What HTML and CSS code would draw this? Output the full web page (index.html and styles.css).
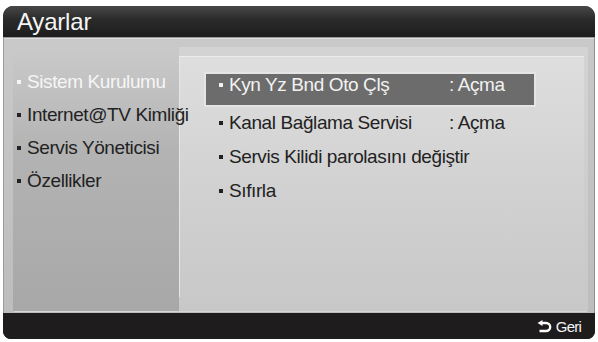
FILE: index.html
```html
<!DOCTYPE html>
<html lang="tr">
<head>
<meta charset="utf-8">
<title>Ayarlar</title>
<link rel="stylesheet" href="styles.css">
</head>
<body>
<div class="frame">
  <div class="titlebar">Ayarlar</div>
  <div class="main">
    <div class="inset">
      <ul class="side">
        <li class="side-item active"><span class="dot"></span>Sistem Kurulumu</li>
        <li class="side-item"><span class="dot"></span>Internet@TV Kimliği</li>
        <li class="side-item"><span class="dot"></span>Servis Yöneticisi</li>
        <li class="side-item"><span class="dot"></span>Özellikler</li>
      </ul>
      <div class="content">
        <div class="panel">
          <div class="row selected"><span class="label"><span class="dot"></span>Kyn Yz Bnd Oto Çlş</span><span class="value">: Açma</span></div>
          <div class="row"><span class="label"><span class="dot"></span>Kanal Bağlama Servisi</span><span class="value">: Açma</span></div>
          <div class="row"><span class="label"><span class="dot"></span>Servis Kilidi parolasını değiştir</span></div>
          <div class="row"><span class="label"><span class="dot"></span>Sıfırla</span></div>
        </div>
      </div>
    </div>
  </div>
  <div class="footer">
    <svg class="back-icon" width="15" height="13" viewBox="0 0 15 13" aria-hidden="true">
      <path d="M4.5 3 H9 A4.2 4 0 0 1 9 11 H2.5" fill="none" stroke="#fff" stroke-width="2.4"/>
      <path d="M0.5 3 L5.5 0 L5.5 6 Z" fill="#fff"/>
    </svg>
    <span class="back-text">Geri</span>
  </div>
</div>
</body>
</html>
```

FILE: styles.css
```css
html, body {
  margin: 0;
  padding: 0;
  background: #ffffff;
}

body {
  font-family: "Liberation Sans", Arial, sans-serif;
}

.frame {
  margin: 6px 0 0 3px;
  width: 592px;
  height: 333px;
  display: flex;
  flex-direction: column;
  border-radius: 10px 10px 8px 8px;
  overflow: hidden;
  background: #1e1c1d;
}

.titlebar {
  height: 31px;
  line-height: 31px;
  padding-left: 14px;
  font-size: 24px;
  color: #f4f4f4;
  letter-spacing: -0.2px;
  background: linear-gradient(#474747, #2a2a2a 45%, #1d1d1d);
}

.main {
  height: 276px;
  box-sizing: border-box;
  padding: 9px 6px 2px 9px;
  background: linear-gradient(#c9c9c9, #bdbdbd);
  border-top: 1px solid #9a9a9a;
  border-left: 1px solid #9c9c9c;
  border-right: 1px solid #8e8e8e;
  box-shadow: inset 0 1px 0 #dedede;
}

.inset {
  height: 100%;
  display: grid;
  grid-template-columns: 166px 1fr;
  border-radius: 2px;
  box-shadow: 0 1px 0 #d6d6d6;
}

.side {
  position: relative;
  z-index: 1;
  list-style: none;
  margin: 0;
  padding: 18px 0 0 4px;
  background: linear-gradient(#cacaca, #b3b3b3 40%, #a8a8a8);
  font-size: 19px;
  letter-spacing: -0.4px;
  color: #222222;
  white-space: nowrap;
}

.side-item {
  line-height: 33px;
  height: 33px;
}

.side-item.active {
  color: #f6f6f6;
}

.dot {
  display: inline-block;
  width: 4px;
  height: 4px;
  background: currentColor;
  margin-right: 6px;
  vertical-align: 4px;
}

.content {
  padding: 9px 4px 14px 0;
  background: linear-gradient(#d3d3d3, #c8c8c8);
}

.panel {
  height: 100%;
  box-sizing: border-box;
  padding: 15px 0 0 24px;
  background: linear-gradient(#dedede, #d0d0d0 60%, #c9c9c9);
  border-top: 1px solid #ececec;
  border-left: 1px solid #e6e6e6;
  font-size: 19px;
  letter-spacing: -0.4px;
  color: #222222;
  white-space: nowrap;
}

.row {
  display: flex;
  line-height: 34px;
  height: 34px;
  padding-left: 15px;
}

.row.selected {
  height: 26px;
  line-height: 21px;
  padding: 0 0 5px 13px;
  box-sizing: content-box;
  width: 315px;
  border: 2px solid #e4e4e4;
  background: #6c6c6c;
  color: #f2f2f2;
  margin-bottom: -1px;
}

.label {
  width: 230px;
  flex: none;
}

.footer {
  height: 26px;
  display: flex;
  align-items: center;
  justify-content: flex-end;
  padding-right: 14px;
  gap: 4px;
  background: #1e1c1d;
}

.back-icon {
  display: block;
  margin-top: 1px;
}

.back-text {
  font-size: 15px;
  letter-spacing: -0.8px;
  color: #f4f4f4;
}
```
